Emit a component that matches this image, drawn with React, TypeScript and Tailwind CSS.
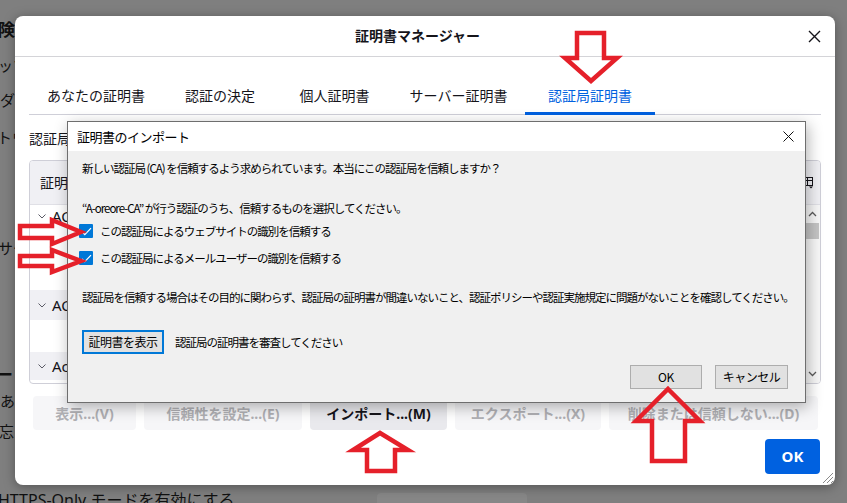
import React from 'react';

const tabs = [
  { label: 'あなたの証明書', w: 'w-[134px]' },
  { label: '認証の決定', w: 'w-[114px]' },
  { label: '個人証明書', w: 'w-[115px]' },
  { label: 'サーバー証明書', w: 'w-[133px]' },
  { label: '認証局証明書', w: 'w-[130px]', active: true },
];

const actions = [
  { label: '表示...(V)', w: 'w-[103px]' },
  { label: '信頼性を設定...(E)', w: 'w-[158px]' },
  { label: 'インポート...(M)', w: 'w-[137px]', enabled: true },
  { label: 'エクスポート...(X)', w: 'w-[146px]' },
  { label: '削除または信頼しない...(D)', w: 'w-[209px]' },
];

const Chevron = () => (
  <svg width="8" height="5" viewBox="0 0 8 5" className="shrink-0">
    <path d="M0.5 0.5 L4 4 L7.5 0.5" fill="none" stroke="#5b5b66" strokeWidth="1" />
  </svg>
);

const WinCheck = () => (
  <span className="w-[14px] h-[14px] bg-[#0078d7] rounded-[1px] flex items-center justify-center shrink-0">
    <svg width="11" height="9" viewBox="0 0 11 9">
      <path d="M1 4.8 L3.8 7.6 L10 1.2" fill="none" stroke="#fff" strokeWidth="1.2" />
    </svg>
  </span>
);

const App: React.FC = () => {
  return (
    <div className="relative w-[847px] h-[503px] overflow-hidden bg-[#7f7f7f] text-[#111] font-['Noto_Sans','Noto_Sans_CJK_JP',sans-serif]">
      {/* page behind the modal */}
      <div className="flex flex-col text-[15px] leading-[20px] whitespace-nowrap">
        <div className="mt-[20px] -ml-[19px] text-[17px] font-bold">危険なコンテンツとダウンロードの防止</div>
        <div className="mt-[15px] -ml-[2px]">ッツをブロックする</div>
        <div className="mt-[15px]">ダウンロード</div>
        <div className="mt-[17px] -ml-[3px]">トウェア</div>
        <div className="mt-[91px] -ml-[2px]">サービス</div>
        <div className="mt-[107px] -ml-[4px] text-[17px] font-bold">ードの保護</div>
        <div className="mt-[6px]">あなたの</div>
        <div className="mt-[10px] -ml-[1px]">忘し</div>
        <div className="mt-[46px] flex items-center">
          <span className="-ml-[2px] text-[16px]">HTTPS-Only モードを有効にする</span>
          <span className="ml-[142px] mt-[6px] w-[150px] h-[20px] rounded-[4px] bg-[#878787]" />
        </div>
      </div>

      {/* certificate manager */}
      <div className="absolute left-[15px] top-[16px] w-[820px] h-[469px] bg-white rounded-[8px] flex flex-col overflow-hidden shadow-[0_2px_12px_rgba(0,0,0,0.35)] text-[#15141a]">
        <div className="h-[41px] shrink-0 border-b border-[#d4d4d8] flex items-center">
          <div className="flex-1 text-center pl-[14px] text-[14px] font-bold leading-[20px]">証明書マネージャー</div>
          <button className="w-[16px] h-[16px] mr-[13px] flex items-center justify-center">
            <svg width="13" height="13" viewBox="0 0 13 13">
              <path d="M1 1 L12 12 M12 1 L1 12" stroke="#15141a" strokeWidth="1.4" />
            </svg>
          </button>
        </div>

        <div className="mt-[18px] mx-[14px] flex border-b border-[#cfcfd8]">
          {tabs.map((t) => (
            <div
              key={t.label}
              className={`${t.w} h-[40px] -mb-px flex items-center justify-center text-[14px] border-b-[3px] pt-[3px] ${
                t.active ? 'border-[#0061e0] text-[#0061e0]' : 'border-transparent'
              }`}
            >
              {t.label}
            </div>
          ))}
        </div>

        <div className="mt-[14px] ml-[14px] h-[20px] text-[14px] leading-[20px]">認証局を識別するため以下の証明書が登録されています:</div>

        {/* certificate table */}
        <div className="mt-[11px] mx-[14px] h-[224px] border border-[#cfcfd8] rounded-[4px] flex flex-col overflow-hidden">
          <div className="h-[44px] shrink-0 bg-[#f0f0f4] border-b border-[#e0e0e6] flex items-center pl-[10px] pr-[6px] text-[14px]">
            <span className="flex-1">証明書名と発行者名</span>
            <span className="w-[120px]">セキュリティデバイス</span>
            <svg width="12" height="12" viewBox="0 0 12 12">
              <rect x="0.5" y="0.5" width="10" height="8" fill="none" stroke="#15141a" />
              <path d="M0.5 3.5 H10.5 M5.5 0.5 V8.5" stroke="#15141a" />
              <path d="M7 9.5 L9 11.5 L11 9.5 Z" fill="#15141a" />
            </svg>
          </div>
          <div className="flex-1 flex overflow-hidden">
            <div className="flex-1 flex flex-col text-[15px]">
              <div className="h-[23px] flex items-center gap-[6px] pl-[8px]"><Chevron />ACCV</div>
              <div className="h-[31px] flex items-center pl-[48px]">ACCVRAIZ1</div>
              <div className="h-[31px] flex items-center pl-[48px]">ACCVRAIZ1</div>
              <div className="h-[30px] flex items-center gap-[6px] pl-[8px] bg-[#f0f0f4]"><Chevron />AC Camerfirma S.A.</div>
              <div className="h-[32px] flex items-center pl-[48px]">AC RAIZ FNMT-RCM</div>
              <div className="h-[28px] flex items-center gap-[6px] pl-[8px] bg-[#f0f0f4]"><Chevron />Actalis S.p.A./03358520967</div>
            </div>
            <div className="w-[15px] shrink-0 bg-[#f7f7f7] flex flex-col items-center">
              <svg width="9" height="6" viewBox="0 0 9 6" className="mt-[6px]">
                <path d="M1 5 L4.5 1.5 L8 5" fill="none" stroke="#5b5b5b" strokeWidth="1.3" />
              </svg>
              <div className="mt-[6px] w-[13px] h-[16px] bg-[#c4c4c4]" />
              <div className="flex-1" />
              <svg width="9" height="6" viewBox="0 0 9 6" className="mb-[6px]">
                <path d="M1 1 L4.5 4.5 L8 1" fill="none" stroke="#5b5b5b" strokeWidth="1.3" />
              </svg>
            </div>
          </div>
        </div>

        <div className="mt-[12px] ml-[18px] flex gap-[8px]">
          {actions.map((a) => (
            <div
              key={a.label}
              className={`${a.w} h-[34px] rounded-[4px] flex items-center justify-center text-[14px] font-bold ${
                a.enabled ? 'bg-[#e9e9ed] text-[#15141a]' : 'bg-[#f6f6f8] text-[#b0b0b4]'
              }`}
            >
              {a.label}
            </div>
          ))}
        </div>

        <div className="mt-[9px] mr-[15px] flex justify-end">
          <button className="w-[55px] h-[35px] rounded-[4px] bg-[#0061e0] text-white text-[15px] font-bold">OK</button>
        </div>

        <svg width="14" height="14" viewBox="0 0 14 14" className="absolute right-[1px] bottom-[1px]">
          <path d="M13 3 L3 13 M13 7 L7 13 M13 11 L11 13" stroke="#8a8a8a" strokeWidth="1" />
        </svg>
      </div>

      {/* import dialog */}
      <div className="absolute left-[67px] top-[121px] w-[739px] h-[282px] border border-[#6e6e6e] bg-[#f0f0f0] flex flex-col shadow-[2px_4px_14px_rgba(0,0,0,0.3)] text-black font-['Noto_Sans_CJK_JP',sans-serif]">
        <div className="h-[29px] shrink-0 bg-white flex items-center">
          <span className="ml-[9px] flex-1 text-[13px] tracking-[-0.5px] leading-[18px]">証明書のインポート</span>
          <svg width="11" height="11" viewBox="0 0 11 11" className="mr-[11px]">
            <path d="M0.5 0.5 L10.5 10.5 M10.5 0.5 L0.5 10.5" stroke="#111" strokeWidth="1" />
          </svg>
        </div>
        <div className="flex-1 flex flex-col px-[14px] text-[11.5px] tracking-[-1px] leading-[18px]">
          <div className="mt-[8px] h-[18px]">新しい認証局 (CA) を信頼するよう求められています。本当にこの認証局を信頼しますか？</div>
          <div className="mt-[22px] h-[18px]">“A-oreore-CA” が行う認証のうち、信頼するものを選択してください。</div>
          <div className="mt-[5px] h-[18px] -ml-[3px] flex items-center gap-[7px]">
            <WinCheck />
            <span>この認証局によるウェブサイトの識別を信頼する</span>
          </div>
          <div className="mt-[9px] h-[18px] -ml-[3px] flex items-center gap-[7px]">
            <WinCheck />
            <span>この認証局によるメールユーザーの識別を信頼する</span>
          </div>
          <div className="mt-[21px] h-[18px] whitespace-nowrap">認証局を信頼する場合はその目的に関わらず、認証局の証明書が間違いないこと、認証ポリシーや認証実施規定に問題がないことを確認してください。</div>
          <div className="mt-[24px] flex items-center">
            <button className="w-[82px] h-[24px] border-2 border-[#0078d7] bg-[#e1e1e1] text-[12px] tracking-[-0.5px]">証明書を表示</button>
            <span className="ml-[11px]">認証局の証明書を審査してください</span>
          </div>
          <div className="mt-[11px] mr-[3px] flex justify-end gap-[13px]">
            <button className="w-[72px] h-[24px] border border-[#adadad] bg-[#e1e1e1] text-[12px] tracking-[-0.3px]">OK</button>
            <button className="w-[73px] h-[24px] border border-[#adadad] bg-[#e1e1e1] text-[12px] tracking-[-0.5px]">キャンセル</button>
          </div>
        </div>
      </div>

      {/* red annotation arrows */}
      <svg className="absolute inset-0 pointer-events-none" width="847" height="503" viewBox="0 0 847 503">
        <g fill="none" stroke="#e5202a" strokeWidth="4.5" strokeLinejoin="miter" strokeMiterlimit="10">
          <polygon points="577,33 604,33 604,58 617,58 591,81 565,58 577,58" />
          <polygon points="20,226 52,226 52,220 81,232 52,244 52,238 20,238" />
          <polygon points="20,256 52,256 52,250 81,261 52,272 52,266 20,266" />
          <polygon points="380,433 408,450 395,450 395,471 367,471 367,450 353,450" />
          <polygon points="668,389 700,421 685,421 685,461 652,461 652,421 636,421" />
        </g>
      </svg>
    </div>
  );
};

export default App;
